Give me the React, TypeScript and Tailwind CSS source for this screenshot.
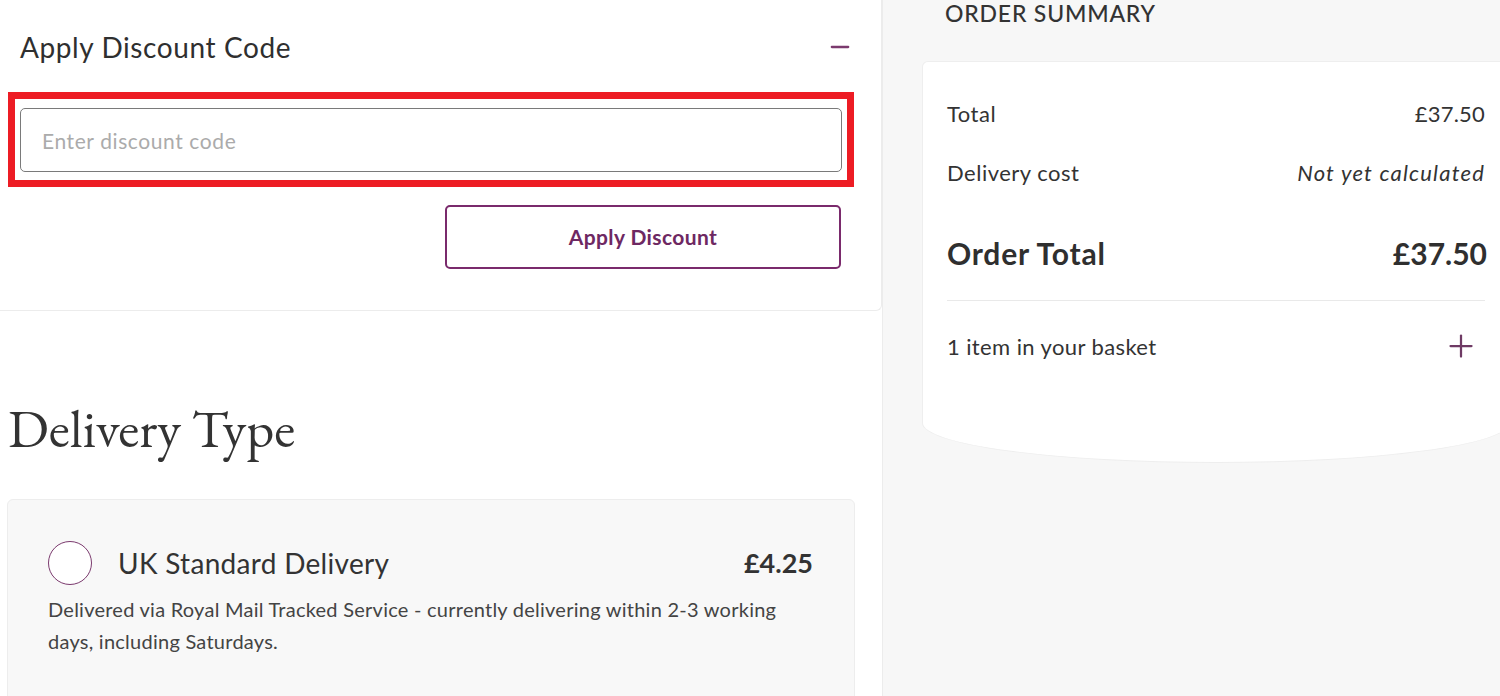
import React, { useState } from "react";
import { Minus, Plus } from "lucide-react";

const sans = "font-['Lato','Open_Sans',sans-serif]";

function DiscountPanel() {
  const [code, setCode] = useState("");

  return (
    <div className="h-[311px] border-b border-r border-[#ececec] rounded-br-md">
      <div className="flex items-center justify-between pl-5 pr-[27px] pt-[29px] h-[92px] pb-[27px]">
        <h2 className="text-[28px] tracking-[0.6px] text-[#2f2f2f] leading-none">Apply Discount Code</h2>
        <Minus className="h-7 w-7 text-[#7b3a6e]" strokeWidth={2} />
      </div>

      {/* highlighted field */}
      <div className="ml-2 w-[846px] border-[7px] border-[#ed1c24] pt-[9px] pb-[8px] px-[5px]">
        <input
          value={code}
          onChange={(e) => setCode(e.target.value)}
          placeholder="Enter discount code"
          className="w-full h-16 rounded-[5px] border border-[#7a7a7a] px-[21px] text-[21px] tracking-[0.6px] text-[#333] placeholder-[#ababab] outline-none"
        />
      </div>

      <div className="flex justify-end pr-10 pt-[18px]">
        <button className="w-[396px] h-16 rounded-[5px] border-2 border-[#7a2a6c] text-[21px] tracking-[0.4px] font-bold text-[#6e2862]">
          Apply Discount
        </button>
      </div>
    </div>
  );
}

function DeliveryType() {
  return (
    <div className="pt-[90px] pl-[7px] pr-[27px]">
      <h2 className="font-['EB_Garamond','Liberation_Serif',serif] text-[54px] leading-none text-[#333] pl-px">
        Delivery Type
      </h2>
      <div className="mt-[44px] h-[220px] rounded-md border border-[#ededed] bg-[#f8f8f8] pl-10 pr-[41px] pt-[41px]">
        <div className="flex items-center">
          <span className="h-11 w-11 rounded-full border border-[#7b3a6e] bg-white" />
          <span className="ml-[26px] text-[28px] tracking-[0.3px] text-[#333]">UK Standard Delivery</span>
          <span className="ml-auto text-[27px] font-bold text-[#333]">£4.25</span>
        </div>
        <p className="mt-[8px] text-[20px] tracking-[0.25px] leading-8 text-[#444] max-w-[760px]">
          Delivered via Royal Mail Tracked Service - currently delivering within 2-3 working{" "}
          <br />
          days, including Saturdays.
        </p>
      </div>
    </div>
  );
}

function SummaryRow({ label, value, italic }: { label: string; value: string; italic?: boolean }) {
  return (
    <div className="flex items-center justify-between h-[59px] text-[22px] tracking-[0.5px] text-[#333]">
      <span>{label}</span>
      <span className={italic ? "italic tracking-[1.2px]" : "tracking-[0.2px]"}>{value}</span>
    </div>
  );
}

function OrderSummary() {
  return (
    <div className="flex-1 bg-[#f7f7f7] pl-[39px] overflow-hidden">
      <h3 className="ml-[23px] text-[23px] font-medium text-[#333] tracking-[0.8px] leading-none pt-[2px]">
        ORDER SUMMARY
      </h3>
      <div className="mt-[36px] w-[588px] h-[402px] bg-white border border-[#eeeeee] rounded-tl-md rounded-bl-[50%_40px] rounded-br-[50%_40px] pl-6 pr-6 pt-[22px]">
        <SummaryRow label="Total" value="£37.50" />
        <SummaryRow label="Delivery cost" value="Not yet calculated" italic />
        <div className="flex items-center justify-between h-[99px] pt-[5px] text-[30px] font-bold text-[#2f2f2f] border-b border-[#e9e9e9]">
          <span className="tracking-[0.8px]">Order Total</span>
          <span className="mr-[-2px]">£37.50</span>
        </div>
        <div className="flex items-center justify-between h-[90px] text-[22px] tracking-[0.4px] text-[#333]">
          <span>1 item in your basket</span>
          <Plus className="h-9 w-9 mr-[6px] text-[#6e3a64]" strokeWidth={1.5} />
        </div>
      </div>
    </div>
  );
}

export default function App() {
  return (
    <div className={`flex w-[1500px] h-[696px] overflow-hidden bg-white ${sans}`}>
      <div className="w-[883px] shrink-0 border-r border-[#ececec]">
        <DiscountPanel />
        <DeliveryType />
      </div>
      <OrderSummary />
    </div>
  );
}
